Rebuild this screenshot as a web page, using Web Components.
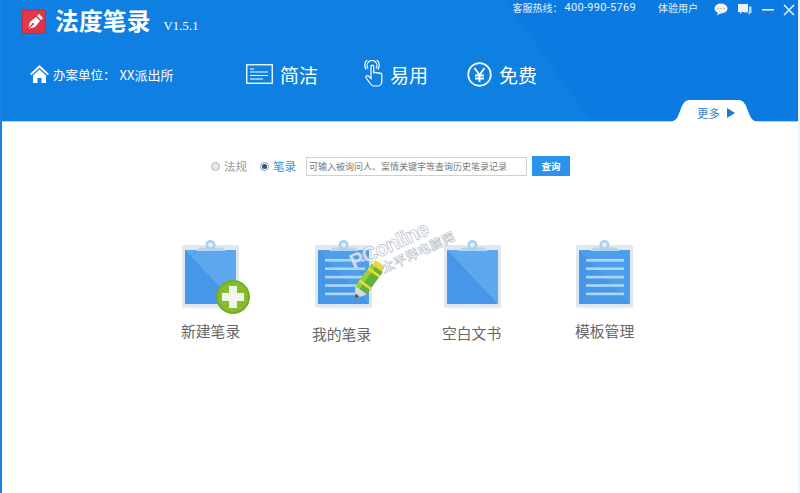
<!DOCTYPE html>
<html lang="zh"><head><meta charset="utf-8">
<style>
html,body{margin:0;padding:0;width:800px;height:493px;overflow:hidden;background:#fff}
body{font-family:"Noto Sans CJK SC","Liberation Sans",sans-serif;position:relative}
</style></head><body>
<app-shell>
  <app-header></app-header>
  <search-bar></search-bar>
  <action-grid>
    <action-item label="新建笔录" kind="new" style="--tx:-1px"></action-item>
    <action-item label="我的笔录" kind="mine" style="--x:15px;--l:3px;--tx:-3px"></action-item>
    <action-item label="空白文书" kind="blank" style="--x:11px;--l:2px;--tx:-2px"></action-item>
    <action-item label="模板管理" kind="tpl" style="--x:14px;--l:0px;--tx:-1px"></action-item>
  </action-grid>
  <pc-watermark></pc-watermark>
</app-shell>
<script>
const clipboard=(k)=>{
 const lines=[0,1,2,3,4].map(i=>`<rect x="10" y="${20+i*8.4}" width="${k==='mine'?40:38}" height="2.600" fill="#aed6f8"/>`).join('');
 return `<svg width="58" height="72" viewBox="0 0 58 72" aria-hidden="true">
 <ellipse cx="29" cy="67.500" rx="32" ry="2.500" fill="#eef1f4"/>
 <rect x="0" y="6" width="57" height="62" rx="2" fill="#e0e7ee"/>
 <rect x="3" y="11" width="51" height="54" rx="1" fill="#4797e8"/>
 ${k==='new'||k==='blank'?'<path d="M3 11H54V65Z" fill="#5ca7ee"/>':'<path d="M3 11H54V65Z" fill="#4f9eeb"/>'}
 ${k==='mine'||k==='tpl'?lines:''}
 <path d="M14 12 L18 8.500 H40 L44 12Z" fill="#b4d6f1"/>
 <circle cx="28.500" cy="6" r="5" fill="#a8cfee"/>
 <circle cx="28.500" cy="6" r="2.400" fill="#e4f1fb"/>
 </svg>`;
};
const overlays={
 new:`<svg class="ov" style="left:33px;top:40px" width="36" height="36" viewBox="0 0 36 36" aria-hidden="true"><circle cx="18" cy="18" r="17" fill="#75ad28"/><circle cx="18" cy="18" r="15" fill="#85bd2f"/><path d="M14 7h8v7h7v8h-7v7h-8v-7H7v-8h7z" fill="#f3f7ea"/></svg>`,
 mine:`<svg class="ov" style="left:37px;top:18px" width="34" height="50" viewBox="0 0 34 50" aria-hidden="true">
 <g transform="rotate(36 15 25)"><rect x="8" y="7" width="14" height="28" rx="2" fill="#62b33a"/><rect x="8" y="7" width="5" height="28" fill="#9ccf3e"/><rect x="8" y="12" width="14" height="2.500" fill="#f0d93a"/><rect x="8" y="27" width="14" height="2.500" fill="#f0d93a"/><rect x="9" y="2" width="12" height="6" rx="2.500" fill="#e7d84a"/><path d="M8 35h14l-7 11z" fill="#d8dbd8"/><path d="M12.500 41h5l-2.500 5z" fill="#555"/></g></svg>`
};
const def=(n,html)=>customElements.define(n,class extends HTMLElement{
 constructor(){super();this.attachShadow({mode:'open'}).innerHTML=html;}
});

def('app-shell',`<style>:host{display:block;width:800px;height:493px;position:relative;overflow:hidden;background:#fff}
.l,.r{position:absolute;top:0;bottom:0}
.l{left:0;width:2px;background:#1a83e2}
.r{right:0;width:2px;background:linear-gradient(90deg,#d7ebfb,#fff)}
</style><slot></slot><div class="l"></div><div class="r"></div>`);

def('app-header',`<style>
:host{display:block;height:122px;box-sizing:border-box;position:relative;color:#fff;
 background:linear-gradient(54.7deg,#0f7fe1 0,#0f7fe1 66.7%,#0b7ae1 66.7%);}
.top{display:flex;align-items:flex-start;height:54px}
.logo{margin:10px 0 0 22px;width:24px;height:24px;flex:none}
h1{margin:6px 0 0 9px;font:700 23.700px/28px "Noto Sans CJK SC",sans-serif;letter-spacing:.2px;white-space:nowrap}
.ver{margin:18px 0 0 13px;font:12.500px/16px "Liberation Serif",serif;letter-spacing:.2px}
.right{margin-left:auto;display:flex;align-items:center;height:14px;padding-top:1px;font-size:10px;line-height:14px;color:#e6f2fc}
.tel{font:11px/14px Roboto,sans-serif;letter-spacing:.3px}
.user{margin-left:22px}
.btns{display:flex;align-items:center;margin:3px 5px 0 16px}
.btns svg{display:block}
.row{display:flex;align-items:center;height:40px}
.org{display:flex;align-items:center;margin-left:30px;width:216px;font-size:12.500px;white-space:nowrap}
.org svg{margin-right:4px}
.xx{font-size:13px;margin-left:4px}
.feat{display:flex;align-items:center;font-size:19px;white-space:nowrap}
.feat svg{margin-right:7px;display:block}
.more{position:absolute;right:40px;bottom:0;width:92px;height:22px;display:flex;align-items:center;justify-content:center;gap:7px;font-size:11.500px;color:#3b84cc;padding:3px 0 0 4px;box-sizing:border-box}
.more svg.bg{position:absolute;inset:0}
.more span,.more .tri{position:relative}
.edge{position:absolute;left:0;right:0;bottom:0;height:1px;background:#a9d8f8}
</style>
<div class="top">
 <svg class="logo" viewBox="0 0 24 24" aria-hidden="true"><rect width="24" height="24" fill="#c62a3d"/><rect x="1" y="1" width="22" height="22" fill="#dc3447"/><path d="M1 1H23L1 23Z" fill="#e2404f" opacity=".6"/><path d="M6 19l2-7 6-5 4 4-5 6z" fill="#fff"/><path d="M15 6l2-2 4 4-2 2z" fill="#fff"/><path d="M6 19l4.500-4.500" stroke="#d92c3f" stroke-width="1.200"/><circle cx="11" cy="14" r="1.100" fill="#d92c3f"/></svg>
 <h1>法度笔录</h1>
 <div class="ver">V1.5.1</div>
 <div class="right">
  <span>客服热线：</span><span class="tel" style="margin-left:2px">400-990-5769</span>
  <span class="user">体验用户</span>
  <div class="btns">
   <svg width="14" height="13" viewBox="0 0 14 13" aria-hidden="true"><ellipse cx="7" cy="5.500" rx="6.500" ry="5" fill="#eef6fd"/><path d="M4 9l-1 3.500 4-2.500z" fill="#eef6fd"/><g fill="#f0a64a"><circle cx="4" cy="5.500" r=".8"/><circle cx="7" cy="5.500" r=".8"/><circle cx="10" cy="5.500" r=".8"/></g></svg>
   <svg style="margin-left:9px" width="15" height="13" viewBox="0 0 15 13" aria-hidden="true"><path d="M1 1h10v8H5l-2 2V9H1z" fill="#e8f3fc"/><path d="M12 3.500h2.500V10H13v2l-2-2H7l-.5-.5H12z" fill="#bcdcf5"/></svg>
   <svg style="margin-left:10px" width="12" height="12" viewBox="0 0 12 12" aria-hidden="true"><rect x="0" y="5" width="12" height="1.600" fill="#e8f3fc"/></svg>
   <svg style="margin-left:9px" width="12" height="12" viewBox="0 0 12 12" aria-hidden="true"><path d="M1 1l10 10M11 1L1 11" stroke="#e8f3fc" stroke-width="1.500"/></svg>
  </div>
 </div>
</div>
<div class="row">
 <div class="org">
  <svg width="19" height="18" viewBox="0 0 19 18" aria-hidden="true"><path d="M9.500 0L19 9l-1.300 1.300L9.500 2.700 1.300 10.300 0 9z" fill="#fff"/><path d="M3 10.500l6.500-6 6.500 6V18h-4.500v-5h-4v5H3z" fill="#fff"/></svg>
  <span>办案单位：<span class="xx">XX派出所</span></span>
 </div>
 <div class="feat" style="width:117px">
  <svg width="27" height="20" viewBox="0 0 27 20" fill="none" stroke="#fff" aria-hidden="true"><rect x=".75" y=".75" width="25.500" height="18.500" stroke-width="1.300"/><path d="M4 5h4M4 8h18M4 11.500h18M4 15h13" stroke-width="1.200"/></svg>
  <span>简洁</span>
 </div>
 <div class="feat" style="width:104px">
  <svg width="20" height="28" viewBox="0 0 20 28" fill="none" stroke="#fff" stroke-width="1.200" aria-hidden="true"><path d="M8 6.500v12l-2.500-2.500c-1.500-1.200-3.500.3-2.300 2l4 5.500c1 1.500 2 2.500 3.800 2.500h3.500c2.500 0 4.300-2 4.300-4.500v-7c0-1.800-2.300-1.800-2.600-.5 0-1.800-2.500-1.800-2.800-.4 0-1.700-2.600-1.700-2.700-.1V6.500c0-1.900-2.700-1.900-2.700 0z"/><path d="M5 8.500a5 5 0 1 1 8 0M3.200 9.500a7.200 7.200 0 1 1 11.600 0"/></svg>
  <span>易用</span>
 </div>
 <div class="feat">
  <svg width="25" height="25" viewBox="0 0 25 25" fill="none" stroke="#fff" aria-hidden="true"><circle cx="12.500" cy="12.500" r="11.300" stroke-width="1.700"/><path d="M7.500 6l5 7 5-7M12.500 13v7M8 13.500h9M8 16.500h9" stroke-width="1.800"/></svg>
  <span>免费</span>
 </div>
</div>
<div class="edge"></div>
<div class="more">
 <svg class="bg" width="92" height="22" viewBox="0 0 92 22" aria-hidden="true"><path d="M0 22c5 0 8-2 10-6l4-10c2-4 4-6 8-6h48c4 0 6 2 8 6l4 10c2 4 5 6 10 6z" fill="#fff"/></svg>
 <span>更多</span>
 <svg class="tri" width="8" height="10" viewBox="0 0 8 10" aria-hidden="true"><path d="M0 0l8 5L0 10z" fill="#1e78cc"/></svg>
</div>`);

def('search-bar',`<style>
:host{display:flex;align-items:center;height:20px;margin-top:34px;padding-left:211px;font-size:11.500px;color:#979797}
.r{width:9px;height:9px;border-radius:50%;border:1px solid #b5b5b5;box-sizing:border-box;background:#e8e8e8;margin-right:4px;display:flex;align-items:center;justify-content:center}
.r.on{border-color:#7d9cc0;background:#fff}.r.on::after{content:"";width:5px;height:5px;border-radius:50%;background:#2b4e78}
.on-t{color:#2a96ea}
.inp{margin-left:10px;width:221px;height:19px;box-sizing:border-box;border:1px solid #c9d2da;font-size:9px;line-height:17px;color:#777;padding-left:2px;white-space:nowrap;overflow:hidden}
.btn{margin-left:5px;width:38px;height:20px;background:#2a93ee;color:#fff;font-size:9.500px;font-weight:700;display:flex;align-items:center;justify-content:center}
</style>
<span class="r"></span><span>法规</span>
<span class="r on" style="margin-left:13px"></span><span class="on-t">笔录</span>
<div class="inp">可输入被询问人、案情关键字等查询历史笔录记录</div>
<div class="btn">查询</div>`);

def('action-grid',`<style>:host{display:flex;align-items:flex-start;gap:60px;padding:63px 0 0 182px}</style><slot></slot>`);

customElements.define('action-item',class extends HTMLElement{
 constructor(){super();
  const k=this.getAttribute('kind');
  this.attachShadow({mode:'open'}).innerHTML=`<style>
  :host{display:flex;flex-direction:column;width:58px;margin-left:var(--x,0);position:relative;font-size:14.800px;color:#666}
  .ic{position:relative;width:58px;height:72px}
  .ic svg{display:block}.ov{position:absolute}
  .t{margin:9px 0 0 var(--tx,0);padding-top:var(--l,0);line-height:22px;white-space:nowrap}
  </style><div class="ic">${clipboard(k)}${overlays[k]||''}</div><div class="t">${this.getAttribute('label')}</div>`;
 }
});

def('pc-watermark',`<style>
:host{position:absolute;left:361px;top:250px;transform:rotate(-25deg);transform-origin:0 100%;pointer-events:none;white-space:nowrap;display:block}
.a{font:700 21px/22px "Liberation Sans",sans-serif;color:rgba(255,255,255,.7);-webkit-text-stroke:.6px #aab6c2;letter-spacing:-.9px}
.b{font:700 12.500px/13px "Noto Sans CJK SC",sans-serif;color:#fff;-webkit-text-stroke:.5px #a8b4c0;margin-left:26px;letter-spacing:.8px}
</style><div class="a">PConline</div><div class="b">太平洋电脑网</div>`);
</script>
</body></html>
